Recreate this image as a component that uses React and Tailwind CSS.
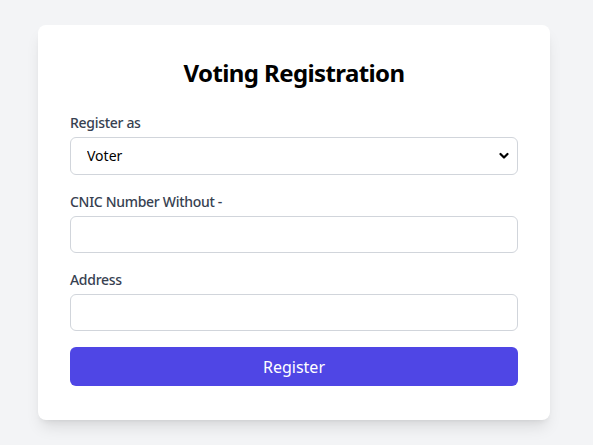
import React from 'react';

const App = () => {
    return (
        <div className="min-h-screen bg-[#f3f4f6] flex justify-center pt-[25px] pr-[5px] font-['Noto_Sans',sans-serif]">
            <div className="w-[512px] h-[395px] bg-white rounded-lg shadow-lg p-8">
                <h2 className="text-2xl font-bold text-center text-black tracking-[-0.6px] mb-6">Voting Registration</h2>

                <div className="mb-[17px]">
                    <label className="block text-sm font-medium text-[#374151] tracking-[-0.3px] mb-1">Register as</label>
                    <div className="relative">
                        <select className="w-full h-[38px] appearance-none border border-[#d1d5db] rounded-md pl-4 pr-8 text-sm text-black bg-white outline-none">
                            <option>Voter</option>
                            <option>Candidate</option>
                        </select>
                        <svg className="absolute right-[9px] top-[15px] w-[10px] h-[8px] pointer-events-none" viewBox="0 0 10 8">
                            <path d="M1.5 2 L5 5.5 L8.5 2" fill="none" stroke="#000" strokeWidth="2.2" strokeLinecap="round" strokeLinejoin="round" />
                        </svg>
                    </div>
                </div>

                <div className="mb-[17px]">
                    <label className="block text-sm font-medium text-[#374151] tracking-[-0.3px] mb-1">CNIC Number Without -</label>
                    <input type="text" className="w-full h-[37px] border border-[#d1d5db] rounded-md px-3 text-sm outline-none" />
                </div>

                <div className="mb-4">
                    <label className="block text-sm font-medium text-[#374151] tracking-[-0.3px] mb-1">Address</label>
                    <input type="text" className="w-full h-[37px] border border-[#d1d5db] rounded-md px-3 text-sm outline-none" />
                </div>

                <button className="w-full h-[39px] bg-[#4f46e5] text-white text-base rounded-md">Register</button>
            </div>
        </div>
    );
};

export default App;
